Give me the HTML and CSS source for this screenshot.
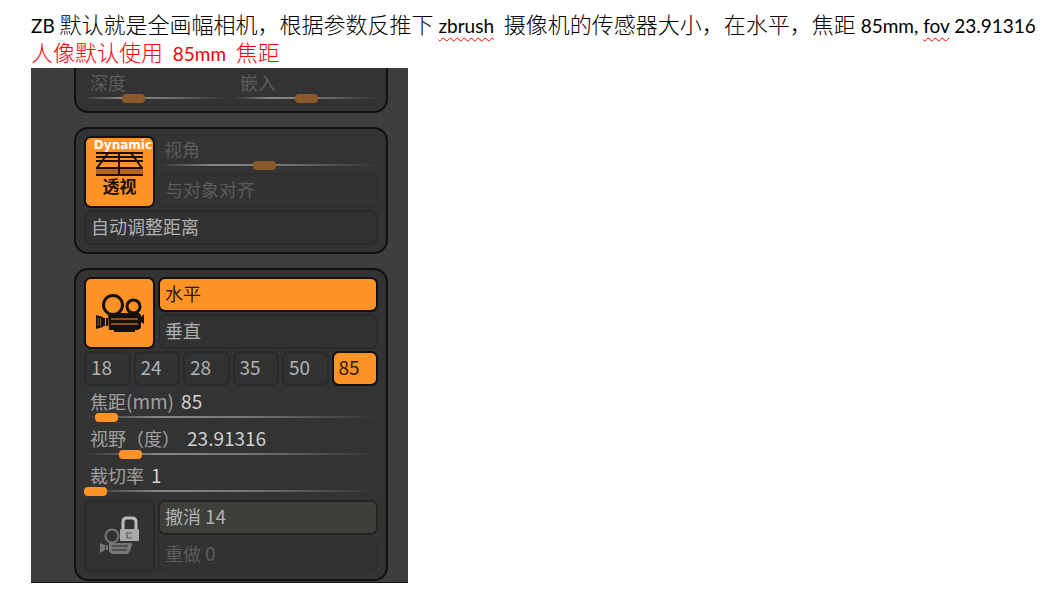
FILE: index.html
```html
<!DOCTYPE html>
<html lang="zh-CN">
<head>
    <meta charset="UTF-8">
    <meta name="viewport" content="width=device-width, initial-scale=1.0">
    <title>ZBrush 相机</title>
    <link rel="stylesheet" href="styles.css">
</head>
<body>
    <div class="notes">
        <p><span class="latin">ZB</span> 默认就是全画幅相机，根据参数反推下 <span class="latin misspelled">zbrush</span>&nbsp; 摄像机的传感器大小，在水平，焦距 <span class="latin">85mm, <span class="misspelled">fov</span> 23.91316</span></p>
        <p class="highlight">人像默认使用&nbsp; <span class="latin">85mm</span>&nbsp; 焦距</p>
    </div>

    <main class="panel">
        <section class="group group-cut">
            <div class="slider-pair">
                <div class="slider disabled">
                    <label for="depth">深度</label>
                    <input type="range" id="depth" min="0" max="100" value="31" disabled>
                </div>
                <div class="slider disabled">
                    <label for="embed">嵌入</label>
                    <input type="range" id="embed" min="0" max="100" value="50" disabled>
                </div>
            </div>
        </section>

        <section class="group">
            <div class="tool-row">
                <button class="tool active perspective">
                    <span class="dynamic">Dynamic</span>
                    <svg width="48" height="24" viewBox="0 0 48 24" aria-hidden="true">
                        <rect x="0" y="15" width="47" height="8" fill="#b5651d"/>
                        <g fill="none" stroke="#1a1005" stroke-width="2">
                            <path d="M0 1H47M0 5H47M0 9H47M0 16H47M0 23H47"/>
                            <path d="M23 0V23M12 1L1 16M35 1L46 16"/>
                        </g>
                    </svg>
                    <span class="caption">透视</span>
                </button>
                <div class="stack">
                    <div class="slider disabled">
                        <label for="angle">视角</label>
                        <input type="range" id="angle" min="0" max="100" value="48" disabled>
                    </div>
                    <button class="btn" disabled>与对象对齐</button>
                </div>
            </div>
            <button class="btn">自动调整距离</button>
        </section>

        <section class="group">
            <div class="tool-row">
                <button class="tool active" aria-label="相机">
                    <svg width="48" height="38" viewBox="0 0 48 38" aria-hidden="true">
                        <g fill="none" stroke="#15100a" stroke-width="3">
                            <circle cx="17" cy="11" r="9.5"/>
                            <circle cx="37.5" cy="12.5" r="6.5"/>
                        </g>
                        <g fill="#15100a">
                            <path d="M12 19H43L45 21V34L42 36H39V38H18V36H13Z"/>
                            <path d="M0 21L7 23V33L0 35ZM7 24H9V32H7ZM10 24H12V32H10ZM45 23L48 20V30L45 28Z"/>
                        </g>
                        <path d="M15 25H42M15 30H42" stroke="#ff9326" stroke-width="1.2"/>
                        <path d="M2 24V32M4.5 24V32" stroke="#ff9326" stroke-width=".6"/>
                    </svg>
                </button>
                <div class="stack">
                    <button class="btn active">水平</button>
                    <button class="btn">垂直</button>
                </div>
            </div>

            <div class="focal-list">
                <button class="btn num">18</button>
                <button class="btn num">24</button>
                <button class="btn num">28</button>
                <button class="btn num">35</button>
                <button class="btn num">50</button>
                <button class="btn num active">85</button>
            </div>

            <div class="slider-list">
                <div class="slider">
                    <label for="focal">焦距<span class="num">(mm)</span> <span class="num value">85</span></label>
                    <input type="range" id="focal" min="0" max="100" value="4">
                </div>
                <div class="slider">
                    <label for="fov">视野（度） <span class="num value">23.91316</span></label>
                    <input type="range" id="fov" min="0" max="100" value="13">
                </div>
                <div class="slider">
                    <label for="crop">裁切率 <span class="num value">1</span></label>
                    <input type="range" id="crop" min="0" max="100" value="0">
                </div>
            </div>

            <div class="tool-row">
                <button class="tool" aria-label="锁定相机">
                    <svg width="40" height="40" viewBox="0 0 40 40" aria-hidden="true">
                        <circle cx="12" cy="20" r="6.5" fill="none" stroke="#777" stroke-width="2"/>
                        <path d="M9 27H32V29L30 35L28 38H12L9 36Z" fill="#777"/>
                        <path d="M0 27L5 29V34L0 37ZM6 29H8V34H6Z" fill="#777"/>
                        <path d="M12 30H28M12 34H27" stroke="#444" stroke-width="1.5"/>
                        <path d="M23 14V6Q23 2 27 2H32Q36 2 36 6V14" fill="none" stroke="#bbb" stroke-width="3"/>
                        <rect x="20" y="13" width="19" height="12" rx="1" fill="#aaa"/>
                        <path d="M32 17H27V22H32" fill="none" stroke="#555" stroke-width="1.2"/>
                    </svg>
                </button>
                <div class="stack">
                    <button class="btn raised">撤消 <span class="num">14</span></button>
                    <button class="btn" disabled>重做 <span class="num">0</span></button>
                </div>
            </div>
        </section>
    </main>
</body>
</html>
```
FILE: styles.css
```css
* {
    margin: 0;
    padding: 0;
    box-sizing: border-box;
}

body {
    font-family: "Noto Sans CJK SC", sans-serif;
    background: #ffffff;
    color: #000000;
    padding: 9px 16px 16px 31px;
}

/* text above the panel */
.notes {
    font-size: 22px;
    font-weight: 300;
    line-height: 28px;
    padding-bottom: 3px;
}

.notes p {
    white-space: nowrap;
}

.latin {
    font-family: Lato, sans-serif;
    font-size: 19px;
    font-weight: 400;
    line-height: 20px;
}

.misspelled {
    text-decoration: underline wavy #ff0000 1px;
    text-underline-offset: 4px;
}

.highlight {
    color: #ff0000;
}

/* camera panel */
.panel {
    max-width: 377px;
    padding: 0 20px 1px 43px;
    background: #3e3e3e;
    border-bottom: 1px solid #151515;
    display: flex;
    flex-direction: column;
    gap: 14px;
}

.group {
    background: #333333;
    border: 2px solid #111111;
    border-radius: 14px;
    padding: 7px 8px;
    display: flex;
    flex-direction: column;
    gap: 2px;
}

.group-cut {
    border-top: none;
    border-radius: 0 0 14px 14px;
    padding-top: 1px;
}

.slider-pair {
    display: grid;
    grid-template-columns: 1fr 1fr;
    gap: 6px;
}

.tool-row {
    display: flex;
    gap: 3px;
}

.stack {
    flex: 1;
    display: flex;
    flex-direction: column;
    gap: 2px;
}

.focal-list {
    display: grid;
    grid-template-columns: repeat(6, 1fr);
    gap: 3px;
}

.slider-list {
    display: flex;
    flex-direction: column;
    gap: 2px;
    padding-bottom: 1px;
}

.btn {
    height: 35px;
    padding: 0 5px 4px;
    border: 2px solid #2a2a2a;
    border-radius: 7px;
    background: #323232;
    color: #b0b0b0;
    font-family: inherit;
    font-size: 18px;
    line-height: 22px;
    text-align: left;
    cursor: pointer;
}

.btn:disabled {
    color: #5c5c5c;
    border-color: #2f2f2f;
    cursor: default;
}

.num,
.btn.num {
    font-size: 19px;
}

.btn.raised {
    background: #3e3e3b;
    border-color: #242424;
}

.tool {
    width: 71px;
    height: 72px;
    border: 2px solid #292929;
    border-radius: 7px;
    background: #323232;
    display: flex;
    flex-direction: column;
    align-items: center;
    justify-content: center;
    cursor: pointer;
}

.btn.active,
.tool.active {
    background: #ff9326;
    border-color: #111111;
    color: #2a1a08;
}

.perspective {
    justify-content: flex-start;
}

.dynamic {
    align-self: flex-end;
    color: #ffffff;
    font: bold 12px/14px "DejaVu Sans", sans-serif;
    padding-right: 1px;
}

.caption {
    color: #1a1005;
    font: bold 17px/20px "Noto Sans CJK SC", sans-serif;
}

.slider {
    height: 35px;
    padding-top: 2px;
    color: #a0a0a0;
}

.slider label {
    display: block;
    padding-left: 6px;
    font-size: 18px;
    line-height: 22px;
    white-space: nowrap;
}

.value {
    color: #d0d0d0;
    margin-left: 3px;
}

.slider input {
    appearance: none;
    display: block;
    width: 100%;
    height: 10px;
    background: linear-gradient(to right, #33333300, #888888 25%, #777777 55%, #33333300) center / 100% 2px no-repeat;
}

.slider input::-webkit-slider-thumb {
    appearance: none;
    width: 23px;
    height: 9px;
    border-radius: 4px;
    background: #ff9326;
}

.slider.disabled {
    color: #5c5c5c;
}

.slider.disabled input::-webkit-slider-thumb {
    background: #8a5a2b;
}
```
